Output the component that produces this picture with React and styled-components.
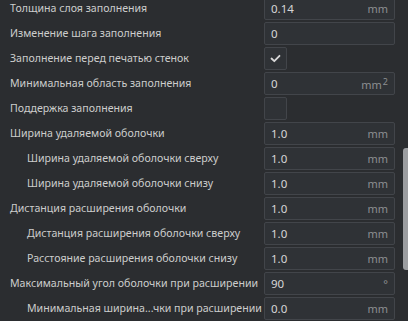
import { createGlobalStyle } from "styled-components";
import styled from "styled-components";

const GlobalStyle = createGlobalStyle`
  html, body {
    margin: 0;
    padding: 0;
    background: #2b2d30;
    overflow: hidden;
  }
  body {
    font-family: "Noto Sans", "Open Sans", sans-serif;
    font-size: 11px;
    color: #d2d2d2;
  }
`;

const Panel = styled.div`
  display: flex;
  width: 408px;
  height: 321px;
  overflow: hidden;
  background: #2b2d30;
`;

const List = styled.div`
  flex: 1;
  min-width: 0;
  margin-top: -4.5px;
  padding-right: 8px;
`;

const Row = styled.div`
  display: grid;
  grid-template-columns: minmax(0, 1fr) 131px;
  align-items: center;
  height: 25px;
`;

const Label = styled.div`
  padding-left: ${(p) => (p.$sub ? "27px" : "10px")};
  white-space: nowrap;
  color: #cdcdcd;
  font-size: 10.6px;
  line-height: 25px;
`;

const Field = styled.div`
  display: flex;
  align-items: center;
  justify-content: space-between;
  height: 23px;
  box-sizing: border-box;
  padding: 0 6px;
  background: #2f3236;
  border: 1px solid #42454a;
  border-radius: 2px;
`;

const Value = styled.span`
  color: #d6d6d6;
  font-size: 11.5px;
`;

const Unit = styled.span`
  color: #8d8f92;
  font-size: 11px;

  sup {
    font-size: 9px;
    vertical-align: 4px;
    margin-left: 1px;
  }
`;

const Check = styled.div`
  display: flex;
  align-items: center;
  justify-content: center;
  width: 23px;
  height: 23px;
  box-sizing: border-box;
  background: #2f3236;
  border: 1px solid #42454a;
  border-radius: 2px;
`;

const Track = styled.div`
  width: 5px;
`;

const Thumb = styled.div`
  width: 5px;
  height: 122px;
  margin-top: 148px;
  background: #9c9ea1;
  border-radius: 3px 0 0 3px;
`;

const rows = [
  { label: "Толщина слоя заполнения", value: "0.14", unit: "mm" },
  { label: "Изменение шага заполнения", value: "0" },
  { label: "Заполнение перед печатью стенок", check: true, checked: true },
  { label: "Минимальная область заполнения", value: "0", unit: "mm", sq: true },
  { label: "Поддержка заполнения", check: true },
  { label: "Ширина удаляемой оболочки", value: "1.0", unit: "mm" },
  { label: "Ширина удаляемой оболочки сверху", value: "1.0", unit: "mm", sub: true },
  { label: "Ширина удаляемой оболочки снизу", value: "1.0", unit: "mm", sub: true },
  { label: "Дистанция расширения оболочки", value: "1.0", unit: "mm" },
  { label: "Дистанция расширения оболочки сверху", value: "1.0", unit: "mm", sub: true },
  { label: "Расстояние расширения оболочки снизу", value: "1.0", unit: "mm", sub: true },
  { label: "Максимальный угол оболочки при расширении", value: "90", unit: "°" },
  { label: "Минимальная ширина...чки при расширении", value: "0.0", unit: "mm", sub: true },
];

const CheckMark = () => (
  <svg width="11" height="9" viewBox="0 0 11 9">
    <path d="M1.5 4.5 L4.3 7.2 L9.5 1.8" fill="none" stroke="#d8d8d8" strokeWidth="1.8" strokeLinecap="round" strokeLinejoin="round" />
  </svg>
);

export default function App() {
  return (
    <>
      <GlobalStyle />
      <Panel>
        <List>
          {rows.map((r, i) => (
            <Row key={i}>
              <Label $sub={r.sub}>{r.label}</Label>
              {r.check ? (
                <Check>{r.checked && <CheckMark />}</Check>
              ) : (
                <Field>
                  <Value>{r.value}</Value>
                  {r.unit && (
                    <Unit>
                      {r.unit}
                      {r.sq && <sup>2</sup>}
                    </Unit>
                  )}
                </Field>
              )}
            </Row>
          ))}
        </List>
        <Track>
          <Thumb />
        </Track>
      </Panel>
    </>
  );
}
